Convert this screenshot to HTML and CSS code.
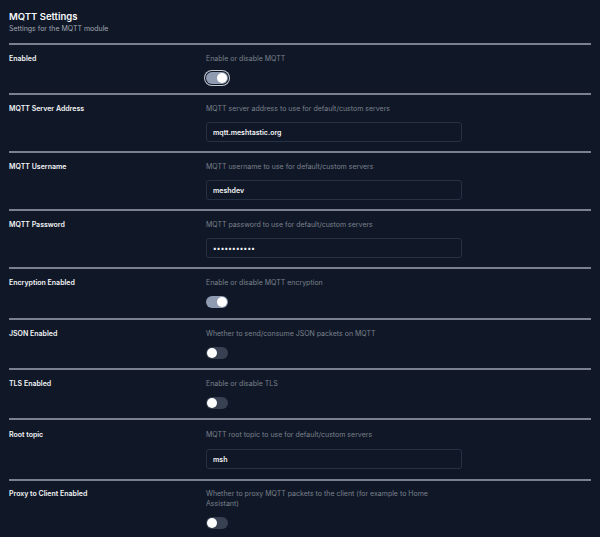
FILE: index.html
```html
<!DOCTYPE html>
<html lang="en">
<head>
<meta charset="utf-8">
<title>MQTT Settings</title>
<link rel="stylesheet" href="styles.css">
</head>
<body>
<div class="page">
  <header class="head">
    <h1 class="title">MQTT Settings</h1>
    <p class="subtitle">Settings for the MQTT module</p>
  </header>

  <div class="row">
    <div class="label">Enabled</div>
    <div class="field">
      <p class="desc">Enable or disable MQTT</p>
      <span class="switch on focus"><span class="knob"></span></span>
    </div>
  </div>

  <div class="row">
    <div class="label">MQTT Server Address</div>
    <div class="field">
      <p class="desc">MQTT server address to use for default/custom servers</p>
      <input class="input" type="text" value="mqtt.meshtastic.org" readonly>
    </div>
  </div>

  <div class="row">
    <div class="label">MQTT Username</div>
    <div class="field">
      <p class="desc">MQTT username to use for default/custom servers</p>
      <input class="input" type="text" value="meshdev" readonly>
    </div>
  </div>

  <div class="row">
    <div class="label">MQTT Password</div>
    <div class="field">
      <p class="desc">MQTT password to use for default/custom servers</p>
      <input class="input pw" type="password" value="large4cats1" readonly>
    </div>
  </div>

  <div class="row tall">
    <div class="label">Encryption Enabled</div>
    <div class="field">
      <p class="desc">Enable or disable MQTT encryption</p>
      <span class="switch on"><span class="knob"></span></span>
    </div>
  </div>

  <div class="row">
    <div class="label">JSON Enabled</div>
    <div class="field">
      <p class="desc">Whether to send/consume JSON packets on MQTT</p>
      <span class="switch"><span class="knob"></span></span>
    </div>
  </div>

  <div class="row">
    <div class="label">TLS Enabled</div>
    <div class="field">
      <p class="desc">Enable or disable TLS</p>
      <span class="switch"><span class="knob"></span></span>
    </div>
  </div>

  <div class="row roomy">
    <div class="label">Root topic</div>
    <div class="field">
      <p class="desc">MQTT root topic to use for default/custom servers</p>
      <input class="input" type="text" value="msh" readonly>
    </div>
  </div>

  <div class="row last">
    <div class="label">Proxy to Client Enabled</div>
    <div class="field">
      <p class="desc wrap">Whether to proxy MQTT packets to the client (for example to Home Assistant)</p>
      <span class="switch"><span class="knob"></span></span>
    </div>
  </div>
</div>
</body>
</html>
```

FILE: styles.css
```css
* { box-sizing: border-box; }

html, body {
  margin: 0;
  padding: 0;
  background: #101828;
}

body {
  font-family: Inter, "Liberation Sans", sans-serif;
  color: #f3f4f6;
  width: 600px;
  height: 537px;
  overflow: hidden;
}

.page {
  padding: 10px 9px 0;
}

.head {
  padding-bottom: 9px;
  border-bottom: 2px solid #7a808d;
}

.title {
  margin: 0;
  font-size: 9.5px;
  line-height: 14px;
  font-weight: 600;
  color: #f8fafc;
}

.subtitle {
  margin: 0;
  font-size: 7px;
  line-height: 10px;
  color: #a1a6b0;
}

.row {
  display: grid;
  grid-template-columns: 197px 1fr;
  padding: 9px 0;
  border-bottom: 2px solid #7a808d;
}

.row.tall { padding-bottom: 10px; }

.row.roomy { padding: 10px 0 9.5px; }
.row.roomy .field { gap: 9px; }

.row.last { border-bottom: none; padding-top: 8.5px; }

.label {
  font-size: 7px;
  line-height: 10px;
  font-weight: 600;
  color: #f3f4f6;
}

.field {
  display: flex;
  flex-direction: column;
  align-items: flex-start;
  gap: 8px;
}

.desc {
  margin: 0;
  font-size: 7px;
  line-height: 10px;
  color: #7b808a;
}

.desc.wrap { max-width: 240px; }

.input {
  display: block;
  width: 256px;
  height: 20px;
  margin: 0;
  padding: 0 6px;
  border: 1px solid #263244;
  border-radius: 3px;
  background: #101828;
  color: #f3f4f6;
  font-family: Inter, "Liberation Sans", sans-serif;
  font-size: 7px;
  font-weight: 600;
  outline: none;
}

.input.pw {
  letter-spacing: 0.3px;
}

.switch {
  position: relative;
  display: block;
  width: 22px;
  height: 12px;
  border-radius: 6px;
  background: #374151;
}

.switch.on { background: #8f9bb1; }

.switch.focus {
  box-shadow: 0 0 0 1px #101828, 0 0 0 2px #c4c9d2;
}

.knob {
  position: absolute;
  top: 1px;
  left: 1px;
  width: 10px;
  height: 10px;
  border-radius: 50%;
  background: #ffffff;
}

.switch.on .knob { left: 11px; }
```
